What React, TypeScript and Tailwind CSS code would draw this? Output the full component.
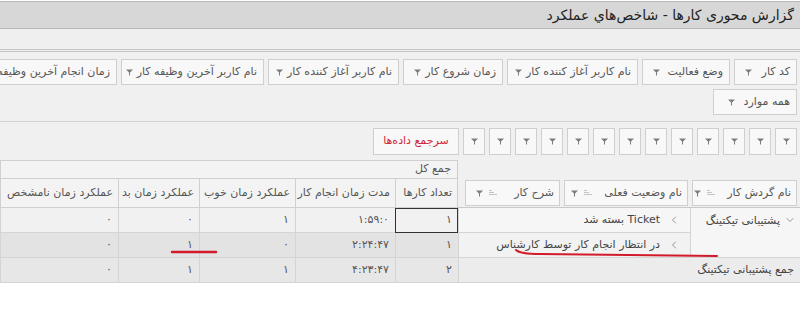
import { ChevronDown, ChevronLeft } from "lucide-react";

const filtersTop = [
  { label: "کد کار", w: "w-[63px]" },
  { label: "وضع فعالیت", w: "w-[88px]" },
  { label: "نام کاربر آغاز کننده کار", w: "w-[131px]" },
  { label: "زمان شروع کار", w: "w-[100px]" },
  { label: "نام کاربر آغاز کننده کار", w: "w-[131px]" },
  { label: "نام کاربر آخرین وظیفه کار", w: "w-[143px]" },
  { label: "زمان انجام آخرین وظیفه کار", w: "w-[160px]" },
];

const rowFields = [
  { label: "نام گردش کار", w: "w-[105px]" },
  { label: "نام وضعیت فعلی", w: "w-[124px]" },
  { label: "شرح کار", w: "w-[95px]" },
];

const headers = ["تعداد کارها", "مدت زمان انجام کار", "عملکرد زمان خوب", "عملکرد زمان بد", "عملکرد زمان نامشخص"];

const rows = [
  { bg: "bg-[#f1f1f1]", cells: ["۱", "۱:۵۹:۰", "۱", "۰", "۰"] },
  { bg: "bg-[#e3e3e3]", cells: ["۱", "۲:۲۴:۴۷", "۰", "۱", "۰"] },
  { bg: "bg-[#e7e7e7]", cells: ["۲", "۴:۲۳:۴۷", "۱", "۱", "۰"] },
];

function Funnel() {
  return (
    <svg width="7" height="7" viewBox="0 0 7 7" className="shrink-0">
      <path d="M0 0.5H7L4 3.5V6.5H3V3.5Z" fill="#7c7c7c" />
    </svg>
  );
}

function SortLines() {
  return (
    <svg width="8" height="8" viewBox="0 0 8 8" className="shrink-0">
      <path d="M0 1.5H3M0 3.5H5M0 5.5H8" stroke="#c4c4c4" strokeWidth="1" />
    </svg>
  );
}

export default function App() {
  return (
    <div
      dir="rtl"
      className="relative h-[320px] w-[800px] overflow-hidden bg-white font-['DejaVu_Sans',sans-serif] text-[11px] text-[#555]"
    >
      {/* title */}
      <div className="mt-[1px] flex h-[28px] items-center border-y border-[#b9b9b9] bg-[#d7d7d7] pr-[6px] text-[14px] text-[#222]">
        گزارش محوری کارها - شاخص‌هاي عملکرد
      </div>
      <div className="h-[23px] border-b-[3px] border-double border-[#c3c3c3] bg-[#efefef]" />

      {/* filter area */}
      <div className="flex flex-col gap-[4px] border-b border-[#d3d3d3] bg-[#f0f0f0] pb-[6px] pr-[3px] pt-[7px]">
        <div className="flex gap-[4px] overflow-hidden">
          {filtersTop.map((f, i) => (
            <div
              key={i}
              className={`flex h-[26px] shrink-0 items-center justify-between gap-[4px] overflow-hidden border border-[#cfcfcf] bg-[#f8f8f8] pl-[10px] pr-[6px] ${f.w}`}
            >
              <span className="whitespace-nowrap">{f.label}</span>
              <Funnel />
            </div>
          ))}
        </div>
        <div className="flex">
          <div className="flex h-[26px] w-[84px] items-center justify-between border border-[#cfcfcf] bg-[#f8f8f8] pl-[14px] pr-[6px]">
            <span>همه موارد</span>
            <Funnel />
          </div>
        </div>
      </div>

      {/* data header filters */}
      <div className="flex h-[38px] items-center gap-[4px] bg-[#f0f0f0] pr-[3px]">
        {Array.from({ length: 13 }).map((_, i) => (
          <div key={i} className="flex h-[27px] w-[22px] shrink-0 items-center justify-center border border-[#cfcfcf] bg-[#f8f8f8]">
            <Funnel />
          </div>
        ))}
        <div className="flex h-[27px] w-[86px] shrink-0 items-center justify-center border border-[#cfcfcf] bg-[#f8f8f8] text-[#d0283a]">
          سرجمع داده‌ها
        </div>
      </div>

      {/* pivot grid */}
      <div className="grid grid-cols-[110px_232px_63px_100px_96px_81px_118px] grid-rows-[18px_30px_25px_25px_25px] bg-[#f0f0f0]">
        <div className="col-span-2 row-span-2 flex items-end gap-[4px] border-b border-[#c9c9c9] pb-[1px] pr-[3px]">
          {rowFields.map((f, i) => (
            <div
              key={i}
              className={`flex h-[26px] shrink-0 items-center gap-[6px] border border-[#cfcfcf] bg-[#f8f8f8] pl-[10px] pr-[5px] ${f.w}`}
            >
              <span className="whitespace-nowrap">{f.label}</span>
              <span className="flex-1" />
              <SortLines />
              <Funnel />
            </div>
          ))}
        </div>
        <div className="col-span-5 flex items-center border-l border-r border-t border-[#cfcfcf] bg-[#f3f3f3] pr-[6px]">
          جمع کل
        </div>
        {headers.map((h, i) => (
          <div
            key={i}
            className={`flex items-center overflow-hidden whitespace-nowrap border-b border-l border-t border-[#cfcfcf] bg-[#f3f3f3] pr-[5px] ${i === 0 ? "border-r" : ""}`}
          >
            {h}
          </div>
        ))}

        {/* row 1 */}
        <div className="row-span-2 flex items-start gap-[4px] border-b border-l border-[#d4d4d4] bg-[#f6f6f6] pr-[4px] pt-[5px]">
          <ChevronDown size={12} strokeWidth={1.5} className="mt-[1px] text-[#777]" />
          <span className="text-[#444]">پشتیبانی تیکتینگ</span>
        </div>
        <div className="flex items-center gap-[8px] border-b border-l border-[#d4d4d4] bg-[#f6f6f6] pr-[10px]">
          <ChevronLeft size={12} strokeWidth={1.5} className="text-[#777]" />
          <span className="text-[#444]">Ticket بسته شد</span>
        </div>
        {rows[0].cells.map((c, i) => (
          <div
            key={i}
            className={`flex items-center border-b border-l border-[#d4d4d4] pr-[6px] ${rows[0].bg} ${i === 0 ? "outline-1 -outline-offset-1 outline-[#333]" : ""}`}
          >
            {c}
          </div>
        ))}

        {/* row 2 */}
        <div className="flex items-center gap-[8px] border-b border-l border-[#d4d4d4] bg-[#f2f2f2] pr-[10px]">
          <ChevronLeft size={12} strokeWidth={1.5} className="text-[#777]" />
          <span className="whitespace-nowrap text-[#444]">در انتظار انجام کار توسط کارشناس</span>
        </div>
        {rows[1].cells.map((c, i) => (
          <div key={i} className={`flex items-center border-b border-l border-[#d4d4d4] pr-[6px] ${rows[1].bg}`}>
            {c}
          </div>
        ))}

        {/* row 3 */}
        <div className="col-span-2 flex items-center border-b border-l border-[#d4d4d4] bg-[#ececec] pr-[6px] text-[#444]">
          جمع پشتیبانی تیکتینگ
        </div>
        {rows[2].cells.map((c, i) => (
          <div key={i} className={`flex items-center border-b border-l border-[#d4d4d4] pr-[6px] ${rows[2].bg}`}>
            {c}
          </div>
        ))}
      </div>

      {/* red hand-drawn marks */}
      <svg className="pointer-events-none absolute left-0 top-0" width="800" height="320">
        <path d="M516 250 C519 253 525 254 540 254 L717 256" stroke="#d11a2a" strokeWidth="2" fill="none" strokeLinecap="round" />
        <path d="M172 252 L216 252" stroke="#d11a2a" strokeWidth="2.5" fill="none" strokeLinecap="round" />
      </svg>
    </div>
  );
}
